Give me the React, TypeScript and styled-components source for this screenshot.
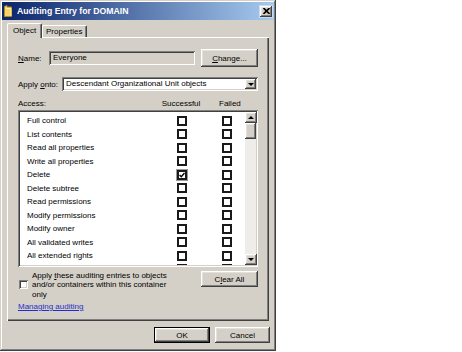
import React from 'react';
import styled, { createGlobalStyle } from 'styled-components';

const GlobalStyle = createGlobalStyle`
  html, body {
    margin: 0;
    padding: 0;
    background: #ffffff;
  }
  body {
    font-family: "Liberation Sans", Arial, sans-serif;
    font-size: 8px;
    color: #000000;
  }
`;

const raised = `
  box-shadow: inset -1px -1px #404040, inset 1px 1px #ffffff,
    inset -2px -2px #808080, inset 2px 2px #e4e1da;
`;

const sunken = `
  box-shadow: inset 1px 1px #808080, inset -1px -1px #ffffff,
    inset 2px 2px #404040, inset -2px -2px #d4d0c8;
`;

const Window = styled.div`
  box-sizing: border-box;
  width: 276px;
  height: 351px;
  padding: 2px;
  background: #d4d0c8;
  box-shadow: inset -1px -1px #404040, inset 1px 1px #d4d0c8,
    inset -2px -2px #808080, inset 2px 2px #ffffff;
  display: flex;
  flex-direction: column;
`;

const TitleBar = styled.div`
  height: 18px;
  display: flex;
  align-items: center;
  padding: 0 2px;
  background: linear-gradient(to right, #0a246a, #a6caf0);
`;

const Title = styled.span`
  margin-left: 5px;
  flex: 1;
  font-size: 8.7px;
  font-weight: bold;
  color: #ffffff;
`;

const CloseButton = styled.div`
  width: 12px;
  height: 11px;
  background: #d4d0c8;
  ${raised}
  display: flex;
  align-items: center;
  justify-content: center;
  outline: 1px solid #c6daf2;
`;

const TabStrip = styled.div`
  height: 17px;
  display: flex;
  align-items: flex-end;
  padding-left: 5px;
`;

const Tab = styled.div<{ $active?: boolean }>`
  box-sizing: border-box;
  width: ${(p) => (p.$active ? 35 : 45)}px;
  height: ${(p) => (p.$active ? 15 : 12)}px;
  margin-bottom: ${(p) => (p.$active ? -1 : 0)}px;
  position: relative;
  z-index: ${(p) => (p.$active ? 1 : 0)};
  padding-left: ${(p) => (p.$active ? 5 : 3)}px;
  padding-top: ${(p) => (p.$active ? 2 : 1)}px;
  background: #d4d0c8;
  border-top: 1px solid #ffffff;
  border-left: 1px solid #ffffff;
  border-right: 1px solid #404040;
  border-radius: 2px 2px 0 0;
  box-shadow: inset -1px 0 #808080;
  line-height: 10px;
`;

const Panel = styled.div`
  box-sizing: border-box;
  width: 262px;
  height: 284px;
  margin-left: 5px;
  padding: 12px 11px 0 11px;
  background: #d4d0c8;
  box-shadow: inset 1px 1px #ffffff, inset -1px -1px #404040,
    inset -2px -2px #808080;
  display: flex;
  flex-direction: column;
`;

const FieldRow = styled.div<{ $height: number; $top?: number }>`
  height: ${(p) => p.$height}px;
  margin-top: ${(p) => p.$top ?? 0}px;
  display: flex;
  align-items: center;
`;

const Label = styled.span<{ $width: number }>`
  width: ${(p) => p.$width}px;
  flex-shrink: 0;
`;

const ReadOnlyField = styled.div`
  box-sizing: border-box;
  width: 146px;
  height: 14px;
  padding: 2px 4px;
  line-height: 10px;
  background: #d4d0c8;
  ${sunken}
`;

const PushButton = styled.div<{ $width: number; $height?: number; $default?: boolean }>`
  box-sizing: border-box;
  width: ${(p) => p.$width}px;
  height: ${(p) => p.$height ?? 16}px;
  margin-left: auto;
  display: flex;
  align-items: center;
  justify-content: center;
  background: #d4d0c8;
  ${raised}
  border: ${(p) => (p.$default ? '1px solid #000' : 'none')};
  flex-shrink: 0;
`;

const Select = styled.div`
  box-sizing: border-box;
  flex: 1;
  height: 14px;
  padding: 2px;
  display: flex;
  align-items: center;
  background: #ffffff;
  ${sunken}
`;

const SelectText = styled.span`
  flex: 1;
  padding-left: 2px;
  line-height: 10px;
`;

const ArrowButton = styled.div<{ $size: number }>`
  box-sizing: border-box;
  width: ${(p) => p.$size}px;
  height: ${(p) => p.$size - 1}px;
  display: flex;
  align-items: center;
  justify-content: center;
  background: #d4d0c8;
  ${raised}
  flex-shrink: 0;
`;

const Triangle = styled.span<{ $up?: boolean }>`
  width: 0;
  height: 0;
  border-left: 3px solid transparent;
  border-right: 3px solid transparent;
  ${(p) => (p.$up ? 'border-bottom: 3px solid #000;' : 'border-top: 3px solid #000;')}
`;

const HeaderRow = styled.div`
  height: 12px;
  margin-top: 6px;
  display: flex;
  align-items: center;
`;

const ColumnHead = styled.span<{ $width: number }>`
  width: ${(p) => p.$width}px;
  text-align: center;
  flex-shrink: 0;
`;

const ListBox = styled.div`
  box-sizing: border-box;
  height: 157px;
  margin-top: 1px;
  padding: 2px;
  background: #ffffff;
  ${sunken}
  display: flex;
`;

const Rows = styled.div`
  flex: 1;
  overflow: hidden;
  padding-top: 2px;
`;

const Row = styled.div`
  height: 13.5px;
  display: flex;
  align-items: center;
  padding-left: 7px;
`;

const RowLabel = styled.span`
  width: 150px;
  flex-shrink: 0;
  white-space: nowrap;
`;

const FlatBox = styled.span<{ $checked?: boolean; $gap?: number }>`
  box-sizing: border-box;
  width: 10px;
  height: 10px;
  margin-left: ${(p) => p.$gap ?? 0}px;
  border: 2px solid #1a1a1a;
  background: #ffffff;
  display: flex;
  align-items: center;
  justify-content: center;
  flex-shrink: 0;
  outline: ${(p) => (p.$checked ? '1px solid #9a9a9a' : 'none')};
`;

const ScrollBar = styled.div`
  width: 11px;
  display: flex;
  flex-direction: column;
`;

const Thumb = styled.div`
  height: 16px;
  background: #d4d0c8;
  ${raised}
`;

const Track = styled.div`
  flex: 1;
  background: #eeede9;
`;

const BottomRow = styled.div`
  margin-top: 4px;
  display: flex;
  align-items: flex-start;
`;

const ApplyChoice = styled.div`
  display: flex;
  align-items: center;
  gap: 4px;
  padding-left: 1px;
`;

const SunkenBox = styled.span`
  box-sizing: border-box;
  width: 9px;
  height: 9px;
  background: #ffffff;
  ${sunken}
  flex-shrink: 0;
`;

const ApplyText = styled.span`
  width: 140px;
  line-height: 9.3px;
`;

const HelpLink = styled.a`
  margin-top: 3px;
  line-height: 10px;
  color: #1f2fc8;
  text-decoration: underline;
  align-self: flex-start;
`;

const Footer = styled.div`
  margin-top: 6px;
  padding-right: 4px;
  display: flex;
  justify-content: flex-end;
  gap: 5px;
`;

const FooterButton = styled(PushButton)`
  margin-left: 0;
`;

const rights = [
  'Full control',
  'List contents',
  'Read all properties',
  'Write all properties',
  'Delete',
  'Delete subtree',
  'Read permissions',
  'Modify permissions',
  'Modify owner',
  'All validated writes',
  'All extended rights',
  'Create all child objects',
];

const Check = () => (
  <svg width="6" height="6" viewBox="0 0 6 6">
    <path d="M0.6 3 L2.3 4.7 L5.5 1" fill="none" stroke="#000" strokeWidth="1.4" />
  </svg>
);

const FolderIcon = () => (
  <svg width="8" height="12" viewBox="0 0 8 12">
    <path d="M0.5 1.5 L3 0.5 L3 2 L7.5 2 L7.5 11.5 L0.5 11.5 Z" fill="#f5d36a" stroke="#b08a20" strokeWidth="1" />
    <path d="M2 3.5 L7 3.5 L7 11" fill="none" stroke="#fff3b0" strokeWidth="1" />
  </svg>
);

const CloseGlyph = () => (
  <svg width="7" height="6" viewBox="0 0 7 6">
    <path d="M0.5 0 L6.5 6 M6.5 0 L0.5 6" stroke="#000" strokeWidth="1.6" />
  </svg>
);

export default function App() {
  return (
    <>
      <GlobalStyle />
      <Window>
        <TitleBar>
          <FolderIcon />
          <Title>Auditing Entry for DOMAIN</Title>
          <CloseButton>
            <CloseGlyph />
          </CloseButton>
        </TitleBar>

        <TabStrip>
          <Tab $active>Object</Tab>
          <Tab>Properties</Tab>
        </TabStrip>

        <Panel>
          <FieldRow $height={18}>
            <Label $width={31}>
              <u>N</u>ame:
            </Label>
            <ReadOnlyField>Everyone</ReadOnlyField>
            <PushButton $width={57} $height={18}>
              <span>
                <u>C</u>hange...
              </span>
            </PushButton>
          </FieldRow>

          <FieldRow $height={14} $top={10}>
            <Label $width={44}>
              Apply <u>o</u>nto:
            </Label>
            <Select>
              <SelectText>Descendant Organizational Unit objects</SelectText>
              <ArrowButton $size={11}>
                <Triangle />
              </ArrowButton>
            </Select>
          </FieldRow>

          <HeaderRow>
            <Label $width={125}>Access:</Label>
            <ColumnHead $width={76}>Successful</ColumnHead>
            <ColumnHead $width={14}>Failed</ColumnHead>
          </HeaderRow>

          <ListBox>
            <Rows>
              {rights.map((r) => (
                <Row key={r}>
                  <RowLabel>{r}</RowLabel>
                  <FlatBox $checked={r === 'Delete'}>{r === 'Delete' && <Check />}</FlatBox>
                  <FlatBox $gap={35} />
                </Row>
              ))}
            </Rows>
            <ScrollBar>
              <ArrowButton $size={12}>
                <Triangle $up />
              </ArrowButton>
              <Thumb />
              <Track />
              <ArrowButton $size={12}>
                <Triangle />
              </ArrowButton>
            </ScrollBar>
          </ListBox>

          <BottomRow>
            <ApplyChoice>
              <SunkenBox />
              <ApplyText>
                Apply <u>t</u>hese auditing entries to objects and/or containers within this
                container only
              </ApplyText>
            </ApplyChoice>
            <PushButton $width={57}>
              <span>
                C<u>l</u>ear All
              </span>
            </PushButton>
          </BottomRow>

          <HelpLink href="#">Managing auditing</HelpLink>
        </Panel>

        <Footer>
          <FooterButton $width={56} $default>
            OK
          </FooterButton>
          <FooterButton $width={55}>Cancel</FooterButton>
        </Footer>
      </Window>
    </>
  );
}
